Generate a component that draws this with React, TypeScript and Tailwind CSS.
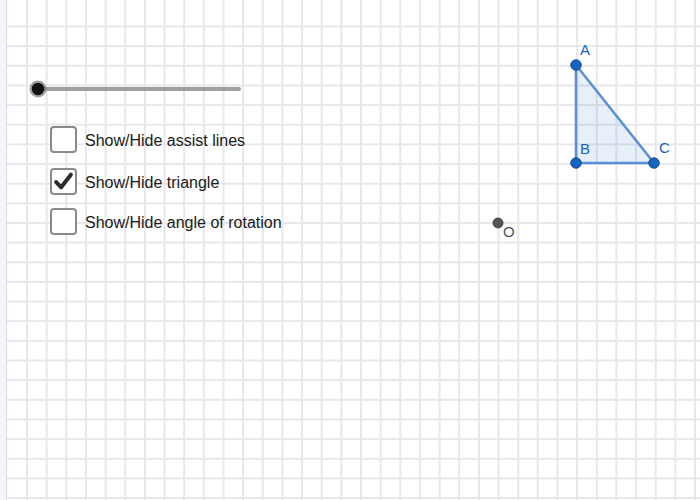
const STEP = 19.647;

const vLines = Array.from({ length: 35 }, (_, k) => 26 + k * STEP);
const hLines = Array.from({ length: 25 }, (_, k) => 25.5 + k * STEP);

function Grid() {
  return (
    <svg className="absolute inset-0" width={700} height={500}>
      <rect x={0} y={0} width={6} height={500} fill="#f4f6f9" />
      <rect x={6} y={0} width={1} height={500} fill="#d5dae2" />
      {vLines.map((x) => (
        <rect key={"v" + x} x={x} y={0} width={2} height={500} fill="#e8e8e8" />
      ))}
      {hLines.map((y) => (
        <rect key={"h" + y} x={7} y={y} width={693} height={2} fill="#e8e8e8" />
      ))}

      {/* triangle */}
      <polygon points="576,65 576,163 654,163" fill="#1565c0" fillOpacity={0.1} stroke="#5a8fd6" strokeWidth={2.5} strokeLinejoin="round" />
      {[
        [576, 65],
        [576, 163],
        [654, 163],
      ].map(([x, y]) => (
        <circle key={x + "-" + y} cx={x} cy={y} r={5.3} fill="#1565c0" stroke="#0d3c78" strokeWidth={0.8} />
      ))}
      <g fill="#1565c0" fontFamily="'Liberation Sans', Arial, sans-serif" fontSize={15}>
        <text x={580} y={55}>A</text>
        <text x={580} y={154}>B</text>
        <text x={659} y={153}>C</text>
      </g>

      {/* point O */}
      <circle cx={498} cy={223} r={5} fill="#555" stroke="#333" strokeWidth={0.8} />
      <text x={503} y={237} fill="#555" fontFamily="'Liberation Sans', Arial, sans-serif" fontSize={15}>
        O
      </text>

      {/* slider */}
      <line x1={38} y1={89} x2={239} y2={89} stroke="#8f8f8f" strokeOpacity={0.85} strokeWidth={4} strokeLinecap="round" />
      <circle cx={38} cy={89} r={8.5} fill="#777" fillOpacity={0.7} />
      <circle cx={38} cy={89} r={6.2} fill="#111" />
    </svg>
  );
}

function Box({ checked, label, className }: { checked?: boolean; label: string; className?: string }) {
  return (
    <div className={"flex items-center gap-2 h-[27px] " + (className ?? "")}>
      <div className="w-[27px] h-[27px] rounded-[4px] border-2 border-[#8a8a8a] bg-white flex items-center justify-center">
        {checked && (
          <svg width={21} height={21} viewBox="0 0 20 20">
            <path d="M3 10.5 L7.8 15.5 L17 3.5" fill="none" stroke="#2b2b2b" strokeWidth={3.8} strokeLinecap="round" strokeLinejoin="round" />
          </svg>
        )}
      </div>
      <span className="text-[16px] text-[#1a1a1a] leading-none mt-[2px]">{label}</span>
    </div>
  );
}

export default function App() {
  return (
    <div className="relative w-[700px] h-[500px] bg-white overflow-hidden" style={{ fontFamily: "'Liberation Sans', Arial, sans-serif" }}>
      <Grid />
      <div className="absolute left-[50px] top-[126px] flex flex-col">
        <Box label="Show/Hide assist lines" />
        <Box checked label="Show/Hide triangle" className="mt-[15px]" />
        <Box label="Show/Hide angle of rotation" className="mt-[13px]" />
      </div>
    </div>
  );
}
